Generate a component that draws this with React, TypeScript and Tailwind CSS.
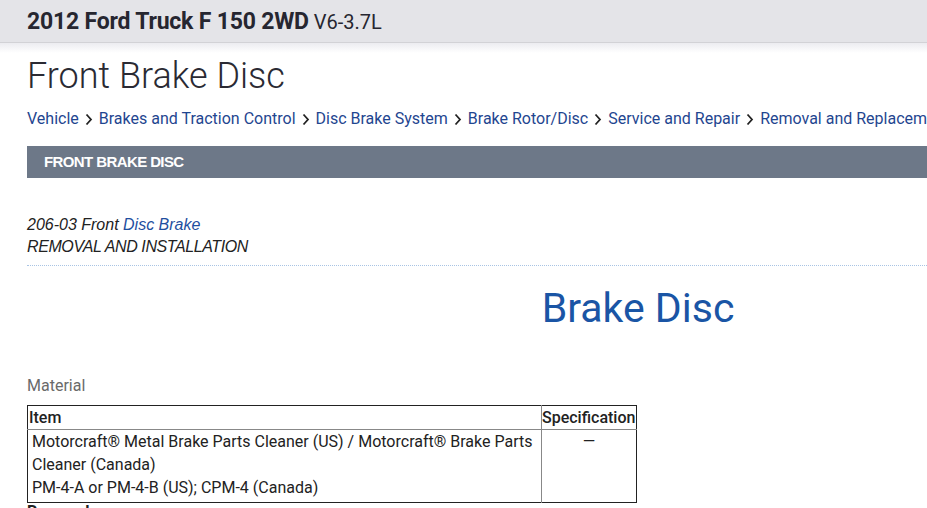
import React from 'react';

const CRUMBS = [
  'Vehicle',
  'Brakes and Traction Control',
  'Disc Brake System',
  'Brake Rotor/Disc',
  'Service and Repair',
  'Removal and Replacement'
];

const Chevron = () => (
  <svg width="8" height="13" viewBox="0 0 8 13" className="mx-[6px] shrink-0">
    <path d="M1.5 1.5 L6 6.5 L1.5 11.5" fill="none" stroke="#222" strokeWidth="1.8" />
  </svg>
);

export default function App() {
  return (
    <div className="h-[508px] w-[927px] overflow-hidden bg-white font-['Roboto',sans-serif] text-[#222]">
      {/* vehicle header band */}
      <div className="h-[43px] whitespace-nowrap border-b border-[#d2d2d6] bg-[#e4e4e8] pl-[27px] pt-[5px]">
        <span className="text-[23px] font-bold tracking-[-0.2px] text-[#262630]">2012 Ford Truck F 150 2WD</span>
        <span className="ml-[5px] text-[20px] text-[#262630]">V6-3.7L</span>
      </div>
      <div className="h-[10px] bg-gradient-to-b from-[#ececf0] to-white" />

      <div className="w-[1249px] pl-[27px]">
        <h1 className="mt-[3px] text-[36px] font-light leading-[41px] text-[#2a2a33]">Front Brake Disc</h1>

        <nav className="mt-[12px] flex items-center whitespace-nowrap text-[16px] leading-[20px] text-[#1f4690]">
          {CRUMBS.map((c, i) => (
            <React.Fragment key={c}>
              {i > 0 && <Chevron />}
              <span>{c}</span>
            </React.Fragment>
          ))}
        </nav>

        <div className="mt-[17px] flex h-[32px] items-center bg-[#6d7888] pl-[17px] font-['Liberation_Sans',sans-serif] text-[15px] font-bold tracking-[-0.6px] text-white">
          FRONT BRAKE DISC
        </div>

        <div className="mt-[36px] font-['Liberation_Sans',sans-serif] text-[16px] italic leading-[22px] text-[#222]">
          <div>
            206-03 Front <span className="text-[#1f4fa0]">Disc Brake</span>
          </div>
          <div className="tracking-[-0.4px]">REMOVAL AND INSTALLATION</div>
        </div>

        <div className="mt-[7px] border-t border-dotted border-[#a9c4e4]" />

        <h2 className="mt-[19px] text-center text-[41px] leading-[46px] text-[#1a55a5]">Brake Disc</h2>

        <div className="mt-[45px] text-[16px] leading-[20px] text-[#6a6a6a]">Material</div>

        <table className="mt-[9px] w-[610px] border-collapse border border-[#222] text-[16px] leading-[23px] text-[#222]">
          <thead>
            <tr className="border-b border-[#888]">
              <th className="h-[24px] border-r border-[#888] pl-[1px] text-left font-medium">Item</th>
              <th className="w-[95px] text-left font-medium">Specification</th>
            </tr>
          </thead>
          <tbody>
            <tr>
              <td className="border-r border-[#888] px-[4px] pb-[3px] pt-0 align-top">
                Motorcraft® Metal Brake Parts Cleaner (US) / Motorcraft® Brake Parts Cleaner (Canada)
                <br />
                PM-4-A or PM-4-B (US); CPM-4 (Canada)
              </td>
              <td className="pt-0 text-center align-top">—</td>
            </tr>
          </tbody>
        </table>

        <div className="mt-[2px] text-[16px] font-bold leading-[14px]">Removal</div>
      </div>
    </div>
  );
}
